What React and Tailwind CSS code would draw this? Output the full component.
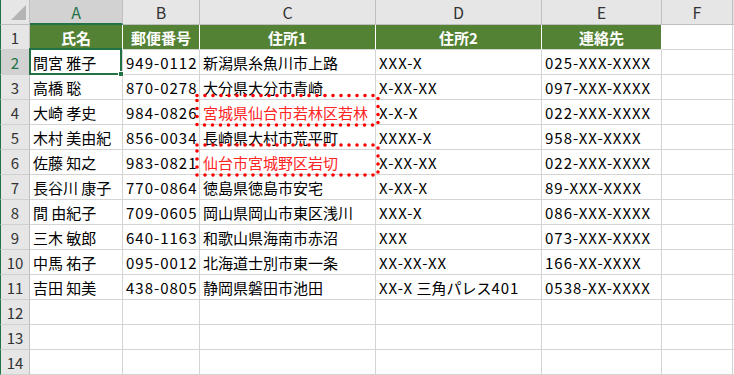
const cols = ['A', 'B', 'C', 'D', 'E', 'F'];
const heads = ['氏名', '郵便番号', '住所1', '住所2', '連絡先'];

const rows = [
  ['間宮 雅子', '949-0112', '新潟県糸魚川市上路', 'XXX-X', '025-XXX-XXXX'],
  ['高橋 聡', '870-0278', '大分県大分市青崎', 'X-XX-XX', '097-XXX-XXXX'],
  ['大崎 孝史', '984-0826', '宮城県仙台市若林区若林', 'X-X-X', '022-XXX-XXXX', true],
  ['木村 美由紀', '856-0034', '長崎県大村市荒平町', 'XXXX-X', '958-XX-XXXX'],
  ['佐藤 知之', '983-0821', '仙台市宮城野区岩切', 'X-XX-XX', '022-XXX-XXXX', true],
  ['長谷川 康子', '770-0864', '徳島県徳島市安宅', 'X-XX-X', '89-XXX-XXXX'],
  ['間 由紀子', '709-0605', '岡山県岡山市東区浅川', 'XXX-X', '086-XXX-XXXX'],
  ['三木 敏郎', '640-1163', '和歌山県海南市赤沼', 'XXX', '073-XXX-XXXX'],
  ['中馬 祐子', '095-0012', '北海道士別市東一条', 'XX-XX-XX', '166-XX-XXXX'],
  ['吉田 知美', '438-0805', '静岡県磐田市池田', 'XX-X 三角パレス401', '0538-XX-XXXX'],
];

// latin runs are a bit wider in the sheet font than in Noto CJK
const Txt = ({ s }) =>
  s ? (
    <span>
      {s.split(/([\x21-\x7e]+)/).map((p, i) =>
        /[\x21-\x7e]/.test(p) ? (
          <span key={i} className="tracking-[1px]">
            {p}
          </span>
        ) : (
          p
        )
      )}
    </span>
  ) : null;

const RowHead = ({ n, active }) => (
  <div
    className={`h-[25px] border-l border-l-[#217346] border-r border-b border-r-[#bfbfbf] border-b-[#d0d0d0] flex items-center justify-center ${
      active ? 'bg-[#d2d2d2] text-[#217346]' : 'bg-[#e6e6e6] text-[#333]'
    }`}
  >
    {n}
  </div>
);

const Cell = ({ children, red }) => (
  <div
    className={`h-[25px] border-r border-b border-[#d4d4d4] bg-white flex items-center pl-[3px] whitespace-pre overflow-visible ${
      red ? 'text-[#ff2424]' : 'text-black'
    }`}
  >
    <Txt s={children} />
  </div>
);

export default function App() {
  return (
    <div className="w-[734px] h-[375px] overflow-hidden bg-white font-['Noto_Sans_CJK_JP','Noto_Sans',sans-serif] text-[15px] leading-none">
      <div className="relative grid grid-cols-[30px_93px_77px_176px_166px_120px_71px_1fr]">
        {/* column headers */}
        <div className="h-[25px] bg-[#e6e6e6] border-l border-l-[#217346] border-r border-b border-r-[#bfbfbf] border-b-[#bfbfbf]">
          <svg width="29" height="24" className="block">
            <polygon points="25,5 25,20 10,20" fill="#b4b4b4" />
          </svg>
        </div>
        {cols.map((c) => (
          <div
            key={c}
            className={`h-[25px] border-r border-r-[#bfbfbf] flex items-center justify-center text-[16px] ${
              c === 'A'
                ? 'bg-[#d2d2d2] border-b-2 border-b-[#217346] text-[#217346]'
                : 'bg-[#e6e6e6] border-b border-b-[#bfbfbf] text-[#333]'
            }`}
          >
            {c}
          </div>
        ))}
        <div className="h-[25px] bg-[#e6e6e6] border-b border-b-[#bfbfbf]" />

        {/* row 1: green titles */}
        <RowHead n={1} />
        {heads.map((h) => (
          <div
            key={h}
            className="h-[25px] bg-[#548235] border-r border-r-white border-b border-b-[#d4d4d4] flex items-center justify-center text-white font-bold"
          >
            {h}
          </div>
        ))}
        <Cell />
        <div className="h-[25px] border-b border-[#d4d4d4]" />

        {/* rows 2-14 */}
        {Array.from({ length: 13 }).map((_, i) => {
          const r = rows[i];
          return [
            <RowHead key={`h${i}`} n={i + 2} active={i === 0} />,
            <Cell key={`a${i}`}>{r?.[0]}</Cell>,
            <Cell key={`b${i}`}>{r?.[1]}</Cell>,
            <Cell key={`c${i}`} red={r?.[5]}>{r?.[2]}</Cell>,
            <Cell key={`d${i}`}>{r?.[3]}</Cell>,
            <Cell key={`e${i}`}>{r?.[4]}</Cell>,
            <Cell key={`f${i}`} />,
            <div key={`g${i}`} className="h-[25px] border-b border-[#d4d4d4]" />,
          ];
        })}

        {/* selected cell A2 */}
        <div className="absolute left-[29px] top-[48px] w-[93px] h-[27px] border-2 border-[#217346] pointer-events-none" />
        <div className="absolute left-[118px] top-[71px] w-[6px] h-[6px] bg-[#217346] border border-white pointer-events-none" />

        {/* red dotted callouts */}
        <svg className="absolute left-0 top-0 pointer-events-none" width="734" height="375">
          <g fill="none" stroke="#ff0000" strokeWidth="3.6" strokeLinecap="round" strokeDasharray="0 8">
            <rect x="197" y="95.5" width="181" height="29.5" />
            <rect x="197" y="145" width="181" height="30" />
          </g>
        </svg>
      </div>
    </div>
  );
}
